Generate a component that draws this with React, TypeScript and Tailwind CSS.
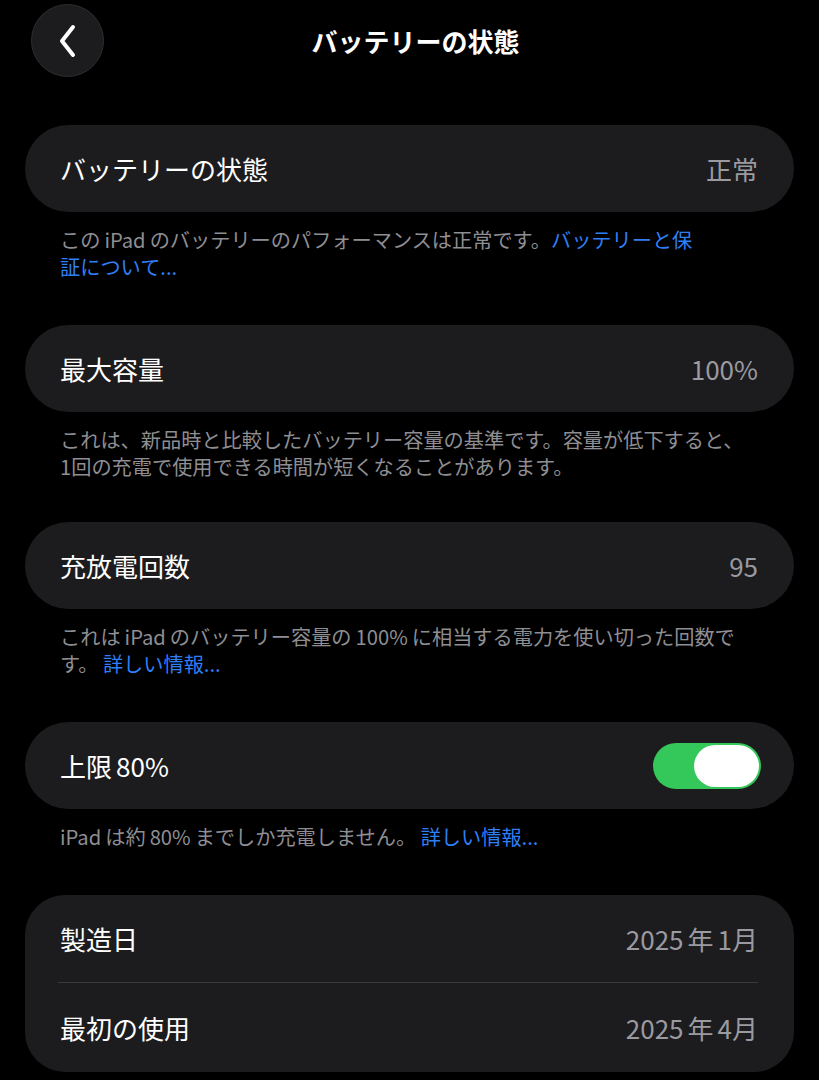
import React from "react";

const font = { fontFamily: '"Noto Sans CJK JP", "Noto Sans", sans-serif' };

function Card({ label, value }: { label: React.ReactNode; value: React.ReactNode }) {
  return (
    <div className="flex h-[87px] items-center justify-between rounded-[44px] bg-[#1c1c1e] pl-[35px] pr-[36px]">
      <span className="text-[26px] text-white">{label}</span>
      <span className="text-[26px] text-[#9a9aa0]">{value}</span>
    </div>
  );
}

function Note({ children }: { children: React.ReactNode }) {
  return (
    <div className="mt-[14px] px-[35px] text-[20.2px] leading-[27px] text-[#8e8e93]">
      {children}
    </div>
  );
}

function Link({ children }: { children: React.ReactNode }) {
  return <span className="text-[#2f7ff5]">{children}</span>;
}

const S = () => <span className="inline-block w-[4px]" />;

export default function App() {
  return (
    <div className="min-h-[1080px] w-[819px] bg-black" style={font}>
      <div className="grid grid-cols-[1fr_auto_1fr] items-center pt-[4px] pl-[31px]">
        <div>
          <div className="flex h-[73px] w-[73px] items-center justify-center rounded-full border border-[#2e2e30] bg-[#1c1c1e]">
            <svg width="26" height="34" viewBox="0 0 26 34" fill="none">
              <path d="M18 3 L7 17 L18 31" stroke="white" strokeWidth="4" strokeLinecap="round" strokeLinejoin="round" />
            </svg>
          </div>
        </div>
        <div className="pr-[19px] text-[26px] font-semibold text-white">バッテリーの状態</div>
        <div />
      </div>

      <div className="mt-[48px] px-[25px] pb-[8px]">
        <Card label="バッテリーの状態" value="正常" />
        <Note>
          <div className="whitespace-nowrap">
            この<S />iPad<S />のバッテリーのパフォーマンスは正常です。<Link>バッテリーと保</Link>
          </div>
          <div className="whitespace-nowrap">
            <Link>証について...</Link>
          </div>
        </Note>

        <div className="mt-[45px]">
          <Card label="最大容量" value="100%" />
        </div>
        <Note>
          <div className="whitespace-nowrap">これは、新品時と比較したバッテリー容量の基準です。容量が低下すると、</div>
          <div className="whitespace-nowrap">1回の充電で使用できる時間が短くなることがあります。</div>
        </Note>

        <div className="mt-[42px]">
          <Card label="充放電回数" value="95" />
        </div>
        <Note>
          <div className="whitespace-nowrap">
            これは<S />iPad<S />のバッテリー容量の<S />100%<S />に相当する電力を使い切った回数で
          </div>
          <div className="whitespace-nowrap">
            す。 <Link>詳しい情報...</Link>
          </div>
        </Note>

        <div className="mt-[45px] flex h-[87px] items-center justify-between rounded-[44px] bg-[#1c1c1e] pl-[35px] pr-[33px]">
          <span className="text-[26px] text-white">
            上限<S />80%
          </span>
          <div className="flex h-[46px] w-[108px] items-center justify-end rounded-full bg-[#34c759] p-[2px]">
            <div className="h-[42px] w-[65px] rounded-full bg-white" />
          </div>
        </div>
        <Note>
          <div className="whitespace-nowrap">
            iPad<S />は約<S />80%<S />までしか充電しません。 <Link>詳しい情報...</Link>
          </div>
        </Note>

        <div className="mt-[45px] rounded-[40px] bg-[#1c1c1e] pl-[33px] pr-[36px]">
          <div className="flex h-[87px] items-center justify-between pl-[2px]">
            <span className="text-[26px] text-white">製造日</span>
            <span className="text-[26px] text-[#9a9aa0]">
              2025<S />年<S />1月
            </span>
          </div>
          <div className="h-px bg-[#3a3a3c]" />
          <div className="flex h-[89px] items-center justify-between pl-[2px]">
            <span className="text-[26px] text-white">最初の使用</span>
            <span className="text-[26px] text-[#9a9aa0]">
              2025<S />年<S />4月
            </span>
          </div>
        </div>
      </div>
    </div>
  );
}
